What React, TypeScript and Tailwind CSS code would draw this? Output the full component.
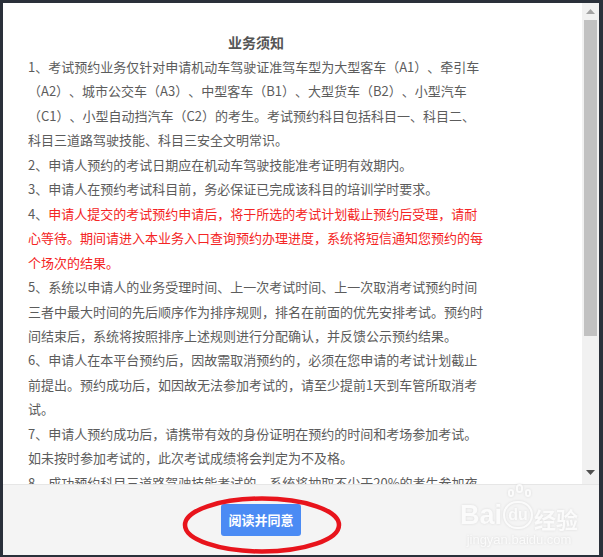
import React from 'react';

type Para = { lines: string[]; red?: boolean };

const paras: Para[] = [
  {
    lines: [
      '1、考试预约业务仅针对申请机动车驾驶证准驾车型为大型客车（A1）、牵引车',
      '（A2）、城市公交车（A3）、中型客车（B1）、大型货车（B2）、小型汽车',
      '（C1）、小型自动挡汽车（C2）的考生。考试预约科目包括科目一、科目二、',
      '科目三道路驾驶技能、科目三安全文明常识。',
    ],
  },
  { lines: ['2、申请人预约的考试日期应在机动车驾驶技能准考证明有效期内。'] },
  { lines: ['3、申请人在预约考试科目前，务必保证已完成该科目的培训学时要求。'] },
  {
    red: true,
    lines: [
      '申请人提交的考试预约申请后，将于所选的考试计划截止预约后受理，请耐',
      '心等待。期间请进入本业务入口查询预约办理进度，系统将短信通知您预约的每',
      '个场次的结果。',
    ],
  },
  {
    lines: [
      '5、系统以申请人的业务受理时间、上一次考试时间、上一次取消考试预约时间',
      '三者中最大时间的先后顺序作为排序规则，排名在前面的优先安排考试。预约时',
      '间结束后，系统将按照排序上述规则进行分配确认，并反馈公示预约结果。',
    ],
  },
  {
    lines: [
      '6、申请人在本平台预约后，因故需取消预约的，必须在您申请的考试计划截止',
      '前提出。预约成功后，如因故无法参加考试的，请至少提前1天到车管所取消考',
      '试。',
    ],
  },
  {
    lines: [
      '7、申请人预约成功后，请携带有效的身份证明在预约的时间和考场参加考试。',
      '如未按时参加考试的，此次考试成绩将会判定为不及格。',
    ],
  },
  { lines: ['8、成功预约科目三道路驾驶技能考试的，系统将抽取不少于20%的考生参加夜'] },
];

function Scrollbar() {
  return (
    <div className="w-[17px] bg-[#f1f1f1] flex flex-col items-center">
      <div className="h-[17px] flex items-center justify-center">
        <svg width="9" height="5" viewBox="0 0 9 5">
          <path d="M0 5 L4.5 0 L9 5 Z" fill="#a3a3a3" />
        </svg>
      </div>
      <div className="w-[13px] h-[316px] bg-[#c1c1c1]" />
      <div className="flex-1" />
      <div className="h-[17px] flex items-center justify-center mb-[3px]">
        <svg width="9" height="5" viewBox="0 0 9 5">
          <path d="M0 0 L9 0 L4.5 5 Z" fill="#505050" />
        </svg>
      </div>
    </div>
  );
}

function Watermark() {
  return (
    <div className="absolute left-[457px] top-[16px] flex flex-col items-center text-[#fbfbfb] drop-shadow-[0_0_1px_#dadada] select-none">
      <div className="flex items-end font-['Liberation_Sans',sans-serif] font-bold text-[27px] leading-none">
        <span>Bai</span>
        <span className="relative mx-[1px] w-[30px] h-[28px] rounded-[14px] border-[2px] border-[#fbfbfb] flex items-center justify-center text-[16px]">
          du
          <span className="absolute -top-[14px] left-[3px] w-[6px] h-[8px] rounded-full border-[2px] border-[#fbfbfb]" />
          <span className="absolute -top-[19px] left-[11px] w-[7px] h-[9px] rounded-full border-[2px] border-[#fbfbfb]" />
          <span className="absolute -top-[14px] left-[20px] w-[6px] h-[8px] rounded-full border-[2px] border-[#fbfbfb]" />
        </span>
        <span className="font-['Noto_Sans_CJK_SC',sans-serif] text-[22px]">经验</span>
      </div>
      <div className="mt-[4px] text-[13px] leading-none font-['Liberation_Sans',sans-serif]">jingyan.baidu.com</div>
    </div>
  );
}

export default function App() {
  return (
    <div className="w-[603px] h-[557px] bg-[#2a303a] pt-[3px] pl-[3px] pr-[4px] pb-[2px] font-['Noto_Sans_CJK_SC',sans-serif] [text-spacing-trim:space-all]">
      <div className="h-full flex flex-col bg-white">
        <div className="flex flex-1 min-h-0">
          <div className="flex-1 overflow-hidden pl-[25px] pt-[26px]">
            <div className="w-[456px]">
              <h2 className="text-center text-[14px] leading-[26px] font-bold text-[#555]">业务须知</h2>
              {paras.map((p, i) => (
                <p key={i} className="text-[13px] leading-[24.45px] text-[#5c5c5c] whitespace-nowrap">
                  {p.lines.map((line, j) => (
                    <span key={j} className="block">
                      {p.red && j === 0 && <span>4、</span>}
                      <span className={p.red ? 'text-[#f42424]' : ''}>{line}</span>
                    </span>
                  ))}
                </p>
              ))}
            </div>
          </div>
          <Scrollbar />
        </div>
        <div className="relative h-[71px] shrink-0 bg-[#f4f4f4] border-t border-[#e6e6e6] pl-[218px] pt-[19px]">
          <Watermark />
          <button className="w-[80px] h-[32px] rounded-[3px] bg-[#4b8bf4] text-white text-[13px] font-bold">
            阅读并同意
          </button>
          <svg className="absolute left-[178px] top-[10px] pointer-events-none" width="162" height="60" viewBox="0 0 162 60">
            <ellipse cx="81" cy="30" rx="77" ry="26.5" fill="none" stroke="#e8141c" strokeWidth="4.5" />
          </svg>
        </div>
      </div>
    </div>
  );
}
